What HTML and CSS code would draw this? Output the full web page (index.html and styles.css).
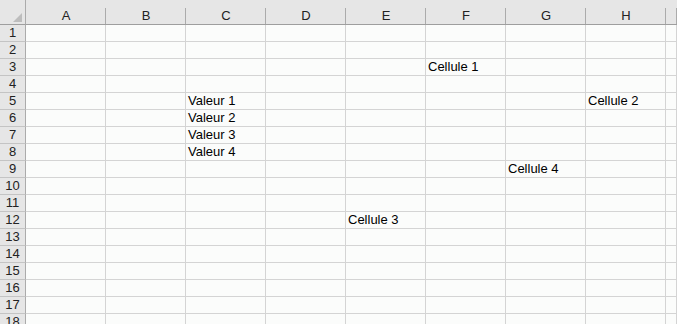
FILE: index.html
```html
<!DOCTYPE html>
<html>
<head>
    <title>Feuille 1</title>
    <meta charset="UTF-8">
    <link rel="stylesheet" href="styles.css">
</head>
<body>
    <div class="sheet" id="sheet">
        <div class="corner">
            <svg width="26" height="25" viewBox="0 0 26 25">
                <polygon points="22,13 22,22 13,22" fill="#bdbdbd"/>
            </svg>
        </div>
    </div>

    <script>
        const cols = ['A', 'B', 'C', 'D', 'E', 'F', 'G', 'H', '']
        const values = {
            'F3': 'Cellule 1',
            'C5': 'Valeur 1',
            'H5': 'Cellule 2',
            'C6': 'Valeur 2',
            'C7': 'Valeur 3',
            'C8': 'Valeur 4',
            'G9': 'Cellule 4',
            'E12': 'Cellule 3'
        }
        const sheet = document.getElementById('sheet')

        cols.forEach(c => {
            const head = document.createElement('div')
            head.className = 'col-head'
            head.textContent = c
            sheet.appendChild(head)
        })

        for (let r = 1; r <= 18; r++) {
            const rowHead = document.createElement('div')
            rowHead.className = 'row-head'
            rowHead.textContent = r
            sheet.appendChild(rowHead)
            cols.forEach(c => {
                const cell = document.createElement('div')
                cell.className = 'cell'
                cell.textContent = values[c + r] || ''
                sheet.appendChild(cell)
            })
        }
    </script>
</body>
</html>
```

FILE: styles.css
```css
:root {
    --head-bg: #e6e6e6;
    --head-line: #ababab;
    --head-edge: #9e9e9e;
    --grid-line: #d4d4d4;
    --cell-bg: #fbfcfb;
}

* {
    margin: 0;
    padding: 0;
    box-sizing: border-box;
}

body {
    background: var(--cell-bg);
    font-family: 'Liberation Sans', Arial, sans-serif;
    font-size: 13px;
    color: #000;
    width: 677px;
    height: 324px;
    overflow: hidden;
}

.sheet {
    display: grid;
    grid-template-columns: 26px repeat(8, 80px) 1fr;
    grid-template-rows: 25px repeat(18, 17px);
}

.corner {
    background: var(--head-bg);
    border-bottom: 1px solid var(--head-edge);
    border-right: 1px solid var(--head-line);
}

.corner svg {
    display: block;
}

.col-head {
    background:
        linear-gradient(var(--head-line), var(--head-line)) right 8px / 1px 16px no-repeat,
        var(--head-bg);
    border-bottom: 1px solid var(--head-edge);
    padding-top: 8px;
    line-height: 16px;
    text-align: center;
    color: #222;
}

.row-head {
    background: var(--head-bg);
    border-right: 1px solid var(--head-line);
    border-bottom: 1px solid #c4c4c4;
    line-height: 16px;
    text-align: center;
    color: #222;
}

.cell {
    border-right: 1px solid var(--grid-line);
    border-bottom: 1px solid var(--grid-line);
    line-height: 16px;
    padding-left: 2px;
    white-space: nowrap;
    overflow: visible;
}
```
